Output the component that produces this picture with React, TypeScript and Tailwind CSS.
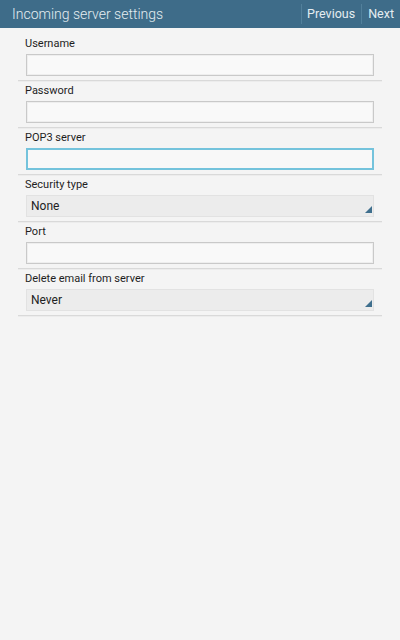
import React from "react";

type Field = { label: string; kind: "input" | "focus" | "select"; value?: string };

const fields: Field[] = [
  { label: "Username", kind: "input" },
  { label: "Password", kind: "input" },
  { label: "POP3 server", kind: "focus" },
  { label: "Security type", kind: "select", value: "None" },
  { label: "Port", kind: "input" },
  { label: "Delete email from server", kind: "select", value: "Never" },
];

function Row({ f }: { f: Field }) {
  return (
    <div className="flex flex-col pt-[3px]">
      <div className="h-[14px] pl-[7px] text-[11px] leading-[14px] text-[#1e1e1e]">{f.label}</div>
      <div className="pt-[3px] pb-[4px] pl-[8px] pr-[8px]">
        {f.kind === "select" ? (
          <div className="relative h-[22px] border border-[#e2e2e2] bg-[#ececec] pl-[4px] text-[12px] leading-[20px] text-[#222]">
            {f.value}
            <svg className="absolute right-[1px] bottom-[3px]" width="7" height="7" viewBox="0 0 7 7">
              <polygon points="7,0 7,7 0,7" fill="#3f6f8d" />
            </svg>
          </div>
        ) : f.kind === "focus" ? (
          <div className="h-[22px] border-2 border-[#74c3dc] bg-[#f8f8f8]" />
        ) : (
          <div className="h-[22px] border border-[#c9c9c9] bg-[#f9f9f9] shadow-[inset_0_0_0_1px_#eeeeee]" />
        )}
      </div>
      <div className="h-[1px] bg-[#d9d9d9] shadow-[0_1px_0_#ececec]" />
    </div>
  );
}

export default function App() {
  return (
    <div
      className="flex h-[640px] w-[400px] flex-col bg-[#f4f4f4]"
      style={{ fontFamily: "Roboto, 'Noto Sans', 'Liberation Sans', sans-serif" }}
    >
      <div className="flex h-[28px] items-center bg-[#3e6c89] text-[#e4ecf1]">
        <div className="flex-1 pl-[12px] text-[14px] font-light leading-[28px]">Incoming server settings</div>
        <div className="h-[20px] w-[1px] bg-[#52809b]" />
        <div className="pl-[5px] pr-[6px] text-[12.5px] leading-[28px]">Previous</div>
        <div className="h-[20px] w-[1px] bg-[#52809b]" />
        <div className="pl-[6px] pr-[6px] text-[12.5px] leading-[28px]">Next</div>
      </div>
      <div className="flex flex-1 px-[18px] pt-[6px]">
        <div className="flex w-full flex-col">
          {fields.map((f) => (
            <Row key={f.label} f={f} />
          ))}
        </div>
      </div>
    </div>
  );
}
